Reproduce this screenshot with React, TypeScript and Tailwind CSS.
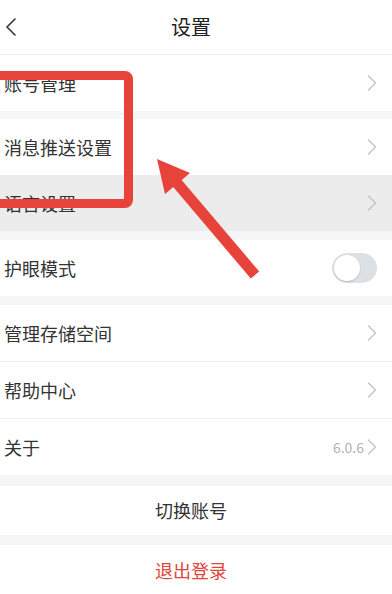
import React from 'react';

const font = { fontFamily: '"Noto Sans CJK SC", "Noto Sans", sans-serif' };

function Chevron() {
  return (
    <svg width="10" height="16" viewBox="0 0 10 16" fill="none" className="shrink-0">
      <path d="M1.5 1 L8.5 8 L1.5 15" stroke="#c4c4c4" strokeWidth="1.4" strokeLinecap="round" strokeLinejoin="round" />
    </svg>
  );
}

type RowProps = {
  label: string;
  extra?: React.ReactNode;
  pressed?: boolean;
  divider?: boolean;
};

function Row({ label, extra, pressed, divider }: RowProps) {
  return (
    <div className={`${pressed ? 'bg-[#ececec]' : 'bg-white'} ${divider ? 'border-b border-[#efefef]' : ''}`}>
      <div className="flex h-[56px] items-center justify-between pl-[4px] pr-[15px]">
        <span className="text-[18px] text-[#333333]">{label}</span>
        {extra ?? <Chevron />}
      </div>
    </div>
  );
}

function Toggle() {
  return (
    <div className="flex h-[30px] w-[45px] items-center rounded-full bg-[#dde0e4] px-[2px]">
      <div className="h-[26px] w-[26px] rounded-full bg-white shadow-[0_1px_2px_rgba(0,0,0,0.15)]" />
    </div>
  );
}

export default function App() {
  return (
    <div className="relative h-[594px] w-[392px] overflow-hidden bg-[#f5f6f8]" style={font}>
      <header className="relative flex h-[55px] items-center justify-center border-b border-[#eeeeee] bg-white pr-[10px]">
        <svg width="12" height="18" viewBox="0 0 12 18" fill="none" className="absolute left-[5px] top-[18px]">
          <path d="M10 1 L2 9 L10 17" stroke="#333333" strokeWidth="1.6" strokeLinecap="round" strokeLinejoin="round" />
        </svg>
        <h1 className="text-[20px] text-[#222222]">设置</h1>
      </header>

      <Row label="账号管理" />

      <div className="mt-[8px]">
        <Row label="消息推送设置" />
        <Row label="语言设置" pressed />
      </div>

      <div className="mt-[9px]">
        <Row label="护眼模式" extra={<Toggle />} />
      </div>

      <div className="mt-[9px] bg-white">
        <Row label="管理存储空间" divider />
        <Row label="帮助中心" divider />
        <Row
          label="关于"
          extra={
            <div className="flex items-center gap-[3px]">
              <span className="text-[14px] text-[#b3b3b3]">6.0.6</span>
              <Chevron />
            </div>
          }
        />
      </div>

      <div className="mt-[11px] flex h-[49px] items-center justify-center bg-white pr-[10px]">
        <span className="text-[18px] text-[#333333]">切换账号</span>
      </div>

      <div className="mt-[10px] flex h-[50px] items-center justify-center bg-white pr-[10px]">
        <span className="text-[18px] text-[#e2453b]">退出登录</span>
      </div>

      {/* annotation overlay */}
      <div className="pointer-events-none absolute left-[-12px] top-[71px] h-[137px] w-[145px] rounded-[8px] border-[9px] border-[#e8433a]" />
      <svg className="pointer-events-none absolute left-0 top-0" width="392" height="594" viewBox="0 0 392 594">
        <line x1="177" y1="183" x2="255" y2="275" stroke="#e8433a" strokeWidth="11" />
        <polygon points="157,159 190,173 165,194" fill="#e8433a" />
      </svg>
    </div>
  );
}
